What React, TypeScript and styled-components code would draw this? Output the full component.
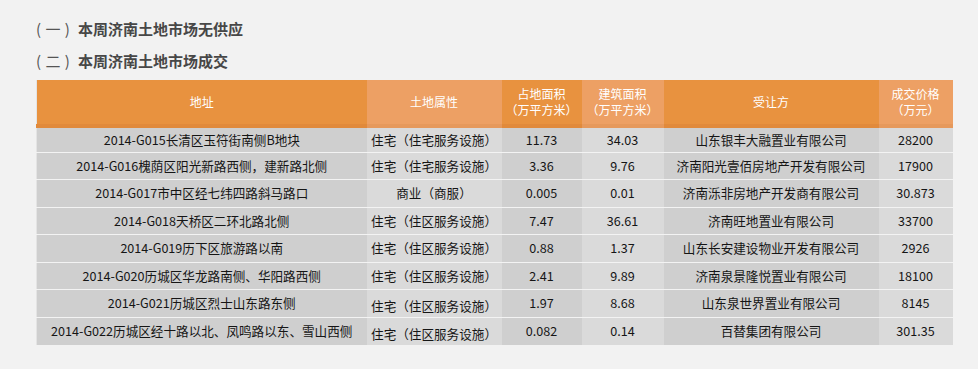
import styled, { createGlobalStyle } from 'styled-components'

type Row = {
  address: string
  usage: string
  land: string
  build: string
  buyer: string
  price: string
  drop?: boolean
}

const rows: Row[] = [
  { address: '2014-G015长清区玉符街南侧B地块', usage: '住宅（住宅服务设施）', land: '11.73', build: '34.03', buyer: '山东银丰大融置业有限公司', price: '28200' },
  { address: '2014-G016槐荫区阳光新路西侧，建新路北侧', usage: '住宅（住宅服务设施）', land: '3.36', build: '9.76', buyer: '济南阳光壹佰房地产开发有限公司', price: '17900' },
  { address: '2014-G017市中区经七纬四路斜马路口', usage: '商业（商服）', land: '0.005', build: '0.01', buyer: '济南泺非房地产开发商有限公司', price: '30.873' },
  { address: '2014-G018天桥区二环北路北侧', usage: '住宅（住区服务设施）', land: '7.47', build: '36.61', buyer: '济南旺地置业有限公司', price: '33700' },
  { address: '2014-G019历下区旅游路以南', usage: '住宅（住区服务设施）', land: '0.88', build: '1.37', buyer: '山东长安建设物业开发有限公司', price: '2926' },
  { address: '2014-G020历城区华龙路南侧、华阳路西侧', usage: '住宅（住区服务设施）', land: '2.41', build: '9.89', buyer: '济南泉景隆悦置业有限公司', price: '18100' },
  { address: '2014-G021历城区烈士山东路东侧', usage: '住宅（住区服务设施）', land: '1.97', build: '8.68', buyer: '山东泉世界置业有限公司', price: '8145', drop: true },
  { address: '2014-G022历城区经十路以北、凤鸣路以东、雪山西侧', usage: '住宅（住区服务设施）', land: '0.082', build: '0.14', buyer: '百替集团有限公司', price: '301.35', drop: true },
]

const columns = [
  { width: 330, title: ['地址'] },
  { width: 135, title: ['土地属性'] },
  { width: 80, title: ['占地面积', '（万平方米）'] },
  { width: 82, title: ['建筑面积', '（万平方米）'] },
  { width: 215, title: ['受让方'] },
  { width: 74, title: ['成交价格', '（万元）'] },
]

const App = () => {
  return (
    <>
      <GlobalStyle />
      <Page>
        <Heading><Num>( 一 )</Num>本周济南土地市场无供应</Heading>
        <Heading><Num>( 二 )</Num>本周济南土地市场成交</Heading>
        <Table>
          <colgroup>
            {columns.map((c, i) => <col key={i} style={{ width: c.width }} />)}
          </colgroup>
          <thead>
            <tr>
              {columns.map((c, i) => (
                <HeadCell key={i} $light={i % 2 === 1}>
                  {c.title.map(line => <HeadLine key={line}>{line}</HeadLine>)}
                </HeadCell>
              ))}
            </tr>
          </thead>
          <tbody>
            {rows.map(r => (
              <BodyRow key={r.address}>
                <Cell>{r.address}</Cell>
                <Cell $light $drop={r.drop}>{r.usage}</Cell>
                <Cell>{r.land}</Cell>
                <Cell $light>{r.build}</Cell>
                <Cell>{r.buyer}</Cell>
                <Cell $light>{r.price}</Cell>
              </BodyRow>
            ))}
          </tbody>
        </Table>
      </Page>
    </>
  )
}

const GlobalStyle = createGlobalStyle`
  html, body {
    margin: 0;
    background: #f2f2f2;
  }
  body {
    font-family: "Noto Sans CJK SC", "Noto Sans", sans-serif;
  }
`

const Page = styled.div`
  padding: 19px 0 0 36px;
`

const Heading = styled.h2`
  margin: 0 0 12px;
  height: 20px;
  line-height: 20px;
  font-size: 15px;
  font-weight: bold;
  color: #474747;
  &:nth-of-type(2) {
    margin-bottom: 9px;
  }
`

const Num = styled.span`
  font-weight: normal;
  color: #555;
  word-spacing: 1px;
  margin-right: 8px;
`

const Table = styled.table`
  width: 916px;
  border-collapse: collapse;
  table-layout: fixed;
  border-left: 1px solid #e4e4e4;
`

const HeadCell = styled.th<{ $light?: boolean }>`
  height: 44px;
  padding: 0;
  border-bottom: 4px solid ${p => (p.$light ? '#e6995c' : '#e18a3b')};
  background: ${p => (p.$light ? '#eda064' : '#e8923f')};
  color: #fff;
  font-size: 12px;
  font-weight: normal;
  text-align: center;
  vertical-align: middle;
`

const HeadLine = styled.div`
  line-height: 16px;
`

const BodyRow = styled.tr`
  height: 27.5px;
  & + & td {
    border-top: 1px solid #f3f3f3;
  }
  &:first-child {
    height: 26px;
  }
`

const Cell = styled.td<{ $light?: boolean; $drop?: boolean }>`
  padding: ${p => (p.$drop ? '5px 0 0' : '0')};
  background: ${p => (p.$light ? '#dadada' : '#cfcfcf')};
  color: #151515;
  font-size: 12.6px;
  line-height: 16px;
  text-align: center;
  vertical-align: middle;
  white-space: nowrap;
  overflow: hidden;
`

export default App
